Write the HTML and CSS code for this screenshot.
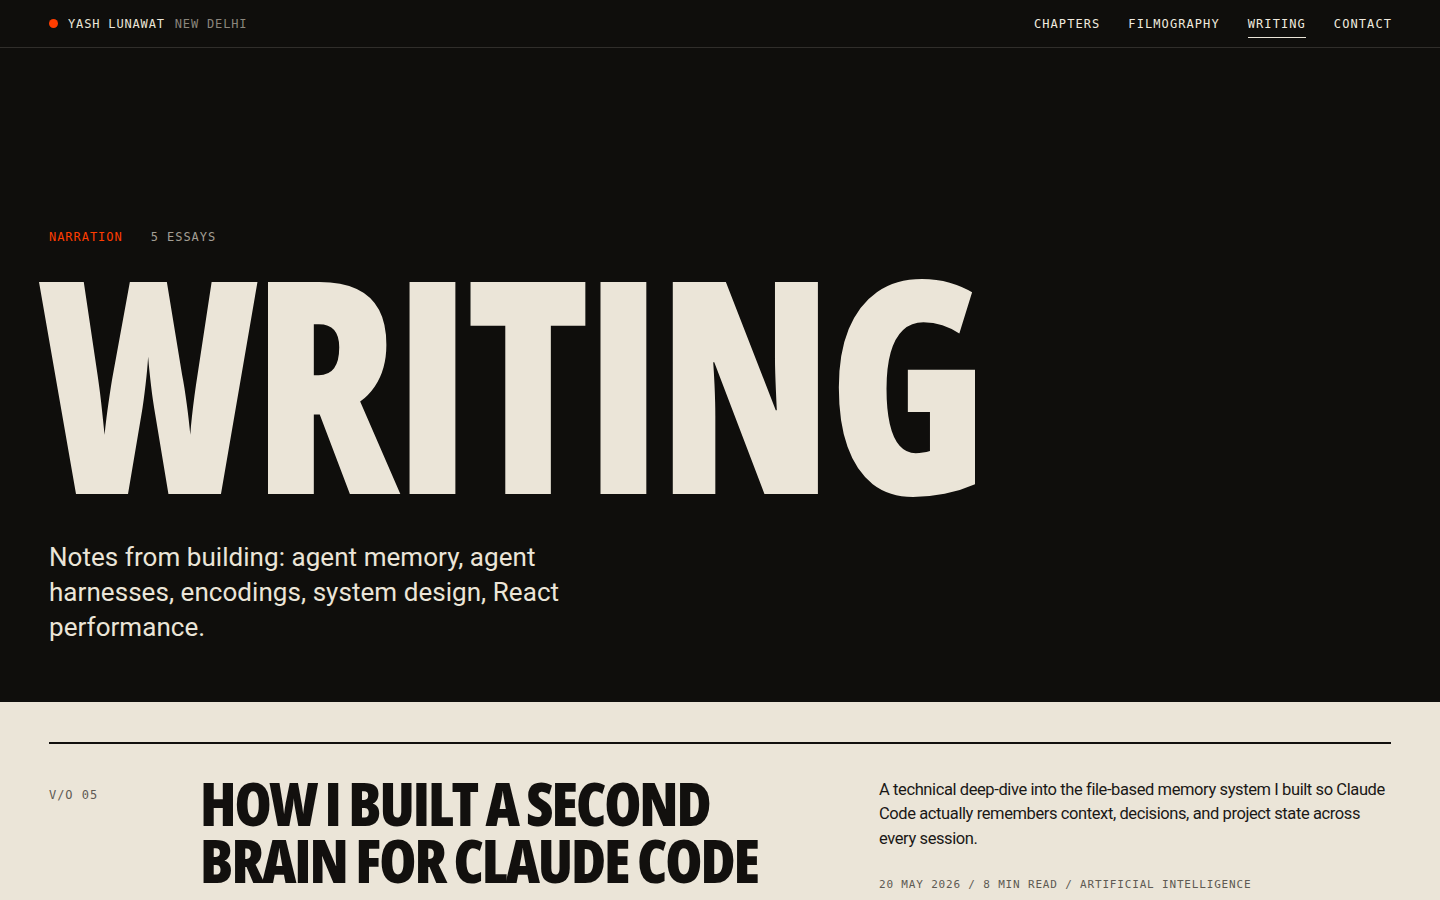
FILE: index.html
```html
<!DOCTYPE html>
<html lang="en">
<head>
<meta charset="utf-8">
<title>Writing — Yash Lunawat</title>
<link rel="stylesheet" href="styles.css">
</head>
<body>
<header class="topbar">
  <div class="brand">
    <span class="brand-dot"></span>
    <span class="brand-name">YASH LUNAWAT</span>
    <span class="brand-city">NEW DELHI</span>
  </div>
  <nav class="nav">
    <a class="nav-link" href="#">CHAPTERS</a>
    <a class="nav-link" href="#">FILMOGRAPHY</a>
    <a class="nav-link is-active" href="#">WRITING</a>
    <a class="nav-link" href="#">CONTACT</a>
  </nav>
</header>

<section class="hero">
  <div class="hero-meta">
    <span class="hero-tag">NARRATION</span>
    <span class="hero-count">5 ESSAYS</span>
  </div>
  <h1 class="hero-title">WRITING</h1>
  <p class="hero-lede">Notes from building: agent memory, agent harnesses, encodings, system design, React performance.</p>
</section>

<section class="list">
  <article class="entry">
    <div class="entry-no">V/O 05</div>
    <h2 class="entry-title">HOW I BUILT A SECOND BRAIN FOR CLAUDE CODE</h2>
    <div class="entry-side">
      <p class="entry-desc">A technical deep-dive into the file-based memory system I built so Claude Code actually remembers context, decisions, and project state across every session.</p>
      <div class="entry-meta">20 MAY 2026 / 8 MIN READ / ARTIFICIAL INTELLIGENCE</div>
    </div>
  </article>
</section>
</body>
</html>
```
FILE: styles.css
```css
* { box-sizing: border-box; }
html, body { margin: 0; padding: 0; }
body {
  background: #0f0e0c;
  color: #ebe5d8;
  font-family: Roboto, "Liberation Sans", sans-serif;
  overflow: hidden;
}

.topbar {
  height: 48px;
  padding: 0 49px;
  border-bottom: 1px solid #302e2b;
  display: flex;
  align-items: center;
  justify-content: space-between;
  font-family: "DejaVu Sans Mono", "Liberation Mono", monospace;
  font-size: 12px;
  line-height: 14px;
  letter-spacing: 0.07em;
}
.brand { display: flex; align-items: center; }
.brand-dot {
  width: 9px; height: 9px; border-radius: 50%;
  background: #ff3d00;
  margin-right: 10px;
}
.brand-name { color: #ebe5d8; margin-right: 10px; }
.brand-city { color: #8a857c; }

.nav { display: flex; gap: 28px; align-items: center; margin-right: -1px; }
.nav-link {
  color: #f0eadf;
  text-decoration: none;
  letter-spacing: 0.09em;
  padding-top: 7px;
  padding-bottom: 6px;
  border-bottom: 1px solid transparent;
}
.nav-link.is-active { border-bottom-color: #ebe5d8; }

.hero {
  padding: 182px 49px 57px;
  background: #0f0e0c;
}
.hero-meta {
  display: flex;
  gap: 28px;
  font-family: "DejaVu Sans Mono", "Liberation Mono", monospace;
  font-size: 12px;
  line-height: 14px;
  letter-spacing: 0.08em;
}
.hero-tag { color: #ff3d00; }
.hero-count { color: #a39e94; }

.hero-title {
  margin: 17px 0 0 -10px;
  font-family: "Open Sans", sans-serif;
  font-weight: 800;
  font-stretch: 75%;
  font-size: 297px;
  line-height: 0.8;
  letter-spacing: -0.02em;
  color: #ebe5d8;
  white-space: nowrap;
  transform: scaleX(0.908);
  transform-origin: left center;
}
.hero-lede {
  margin: 41px 0 0;
  max-width: 570px;
  font-size: 26px;
  line-height: 35px;
  letter-spacing: 0.05px;
  color: #ebe5d8;
}

.list {
  background: #ebe5d8;
  color: #12100e;
  padding: 40px 49px 60px;
}
.entry {
  border-top: 2px solid #12100e;
  padding-top: 31px;
  display: grid;
  grid-template-columns: 151px 679px 512px;
  align-items: start;
}
.entry-no {
  margin-top: 13px;
  font-family: "DejaVu Sans Mono", "Liberation Mono", monospace;
  font-size: 12px;
  line-height: 14px;
  letter-spacing: 0.08em;
  color: #5e5a53;
}
.entry-title {
  margin: 0;
  padding-right: 40px;
  font-family: "Open Sans", sans-serif;
  font-weight: 800;
  font-stretch: 75%;
  font-size: 60px;
  line-height: 57px;
  letter-spacing: -0.035em;
  color: #12100e;
}
.entry-desc {
  margin: 3px 0 0;
  font-size: 16.5px;
  line-height: 24.5px;
  letter-spacing: -0.4px;
  color: #1a1816;
}
.entry-meta {
  margin-top: 27px;
  font-family: "DejaVu Sans Mono", "Liberation Mono", monospace;
  font-size: 11px;
  line-height: 14px;
  letter-spacing: 0.075em;
  color: #5e5a53;
}
```
